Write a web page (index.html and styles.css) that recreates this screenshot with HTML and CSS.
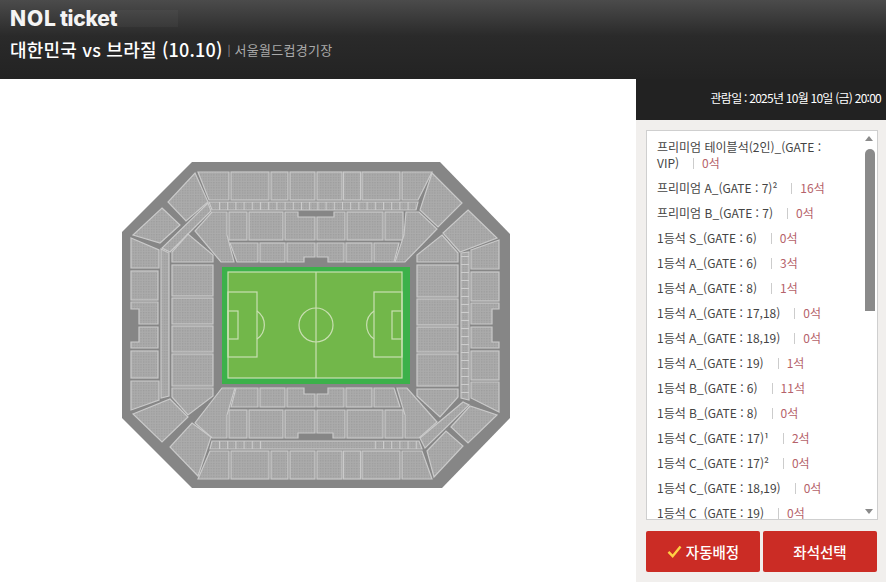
FILE: index.html
```html
<!DOCTYPE html>
<html lang="ko">
<head>
<meta charset="utf-8">
<title>NOL ticket</title>
<link rel="stylesheet" href="styles.css">
</head>
<body>
<header class="top">
  <div class="brand"><span class="nol">NOL</span><span class="ticket">ticket</span><span class="brand-blur"></span></div>
  <div class="event"><h1>대한민국 vs 브라질 (10.10)</h1><span class="bar">|</span><span class="venue">서울월드컵경기장</span></div>
</header>
<div class="main">
  <div class="stage">
    <svg class="map" viewBox="0 79 636 503" width="636" height="503" aria-label="좌석 배치도">
      <defs>
        <pattern id="seat" width="2.6" height="2.6" patternUnits="userSpaceOnUse">
          <rect width="2.6" height="2.6" fill="#ababab"/>
          <rect width="1.3" height="1.3" fill="#9c9c9c"/>
        </pattern>
        <pattern id="tickv" x="219" width="8.2" height="10" patternUnits="userSpaceOnUse">
          <rect width="1" height="10" fill="#cdcdcd"/>
        </pattern>
        <pattern id="tickh" y="256" width="10" height="8" patternUnits="userSpaceOnUse">
          <rect width="10" height="1" fill="#cdcdcd"/>
        </pattern>
      </defs>
      <polygon class="hall" points="192,162 440,162 510,234 510,418 442,488 192,488 122,418 122,232"/>
      <g class="sec" fill="url(#seat)">
        <polygon points="198,172 229,172 229,200 209,200"/>
        <rect x="231" y="172" width="38" height="28"/>
        <rect x="271" y="172" width="17" height="28"/>
        <rect x="290" y="172" width="25" height="28"/>
        <rect x="317" y="172" width="25" height="28"/>
        <rect x="343.500" y="172" width="17" height="28"/>
        <rect x="362" y="172" width="38" height="28"/>
        <polygon points="402,172 432,172 418,200 402,200"/>
        <polygon points="209,202 418,202 416,210 212,210"/>
        <polygon points="212,212 227,212 227,235 234,262 221,262 195,231"/>
        <rect x="229" y="212" width="18" height="28"/>
        <rect x="249" y="212" width="34" height="28"/>
        <polygon points="285,212 298,212 298,217 315,217 315,240 285,240"/>
        <polygon points="317,217 334,217 334,212 345,212 345,240 317,240"/>
        <rect x="347" y="212" width="36" height="28"/>
        <rect x="385" y="212" width="18" height="28"/>
        <polygon points="406,212 419,212 437,229 405,262 395,262 404,235"/>
        <polygon points="230,243 258,243 258,262 237,262"/>
        <rect x="260" y="243" width="25" height="19"/>
        <polygon points="287,243 315,243 315,257 304,257 304,262 287,262"/>
        <polygon points="317,243 344,243 344,262 328,262 328,257 317,257"/>
        <rect x="346" y="243" width="26" height="19"/>
        <polygon points="374,243 399,243 394,262 374,262"/>

        <polygon points="236,388 258,388 258,407 231,407"/>
        <rect x="260" y="388" width="25" height="19"/>
        <polygon points="287,388 304,388 304,394 315,394 315,407 287,407"/>
        <polygon points="317,394 328,394 328,388 344,388 344,407 317,407"/>
        <rect x="346" y="388" width="26" height="19"/>
        <polygon points="374,388 394,388 400,407 374,407"/>
        <polygon points="222,388 235,388 227,415 227,438 212,438 195,423"/>
        <rect x="229" y="410" width="18" height="28"/>
        <rect x="249" y="410" width="34" height="28"/>
        <polygon points="285,410 315,410 315,433 298,433 298,438 285,438"/>
        <polygon points="317,410 345,410 345,438 333,438 333,433 317,433"/>
        <rect x="347" y="410" width="36" height="28"/>
        <rect x="385" y="410" width="18" height="28"/>
        <polygon points="397,388 407,388 437,422 419,438 405,438 405,415"/>
        <polygon points="212,441 419,441 422,449 210,449"/>
        <polygon points="210,451 229,451 229,479 198,479"/>
        <rect x="231" y="451" width="38" height="28"/>
        <rect x="271" y="451" width="17" height="28"/>
        <rect x="290" y="451" width="25" height="28"/>
        <rect x="317" y="451" width="25" height="28"/>
        <rect x="343.500" y="451" width="17" height="28"/>
        <rect x="362" y="451" width="38" height="28"/>
        <polygon points="402,451 422,451 432,479 402,479"/>

        <polygon points="195,173 208,202 186,221 168,202"/>
        <polygon points="162,208 180,225 160,243 133,235"/>
        <polygon points="208,203 211,211 170,252 162,248"/>
        <polygon points="188,234 172,252 172,262 213,262 213,255"/>
        <rect x="172" y="265" width="41" height="31"/>
        <rect x="172" y="298" width="41" height="26"/>
        <rect x="172" y="326" width="41" height="26"/>
        <rect x="172" y="354" width="41" height="32"/>
        <polygon points="172,388 213,388 213,396 188,415 172,397"/>
        <polygon points="161,249 169,253 169,396 161,398"/>
        <polygon points="131,238 159,250 159,268 131,268"/>
        <rect x="131" y="271" width="27" height="29"/>
        <polygon points="131,302 158,302 158,324 139,324 139,309 131,309"/>
        <polygon points="139,327 158,327 158,348 131,348 131,342 139,342"/>
        <rect x="131" y="351" width="27" height="27"/>
        <polygon points="131,381 159,381 159,400 131,410"/>
        <polygon points="133,414 170,399 188,417 162,442"/>
        <polygon points="192,423 211,437 198,476 170,447"/>

        <polygon points="432,173 462,203 438,227 420,210"/>
        <polygon points="468,210 497,238 460,252 443,233"/>
        <polygon points="442,235 458,253 458,262 417,262 417,255"/>
        <rect x="417" y="265" width="41" height="32"/>
        <rect x="417" y="299" width="41" height="26"/>
        <rect x="417" y="327" width="41" height="25"/>
        <rect x="417" y="354" width="41" height="32"/>
        <polygon points="417,389 458,389 458,397 440,417 417,396"/>
        <polygon points="461,253 469,252 469,400 461,398"/>
        <polygon points="471,250 499,240 499,269 471,269"/>
        <rect x="471" y="272" width="28" height="29"/>
        <polygon points="471,303 499,303 499,309 492,309 492,324 471,324"/>
        <polygon points="471,327 492,327 492,342 499,342 499,348 471,348"/>
        <rect x="471" y="351" width="28" height="29"/>
        <polygon points="471,382 499,382 499,412 471,398"/>
        <polygon points="420,438 463,402 469,405 425,448"/>
        <polygon points="427,451 446,431 463,446 434,477"/>
        <polygon points="451,427 470,406 497,415 468,443"/>
      </g>
      <g>
        <rect x="219" y="202" width="197" height="8" fill="url(#tickv)"/>
        <rect x="219" y="441" width="45" height="8" fill="url(#tickv)"/>
        <rect x="372" y="441" width="46" height="8" fill="url(#tickv)"/>
        <rect x="461" y="256" width="8" height="140" fill="url(#tickh)"/>
      </g>
      <rect class="turf" x="222" y="267" width="188" height="117"/>
      <rect class="grass" x="228" y="272" width="174" height="106"/>
      <g class="lines">
        <rect x="228" y="272" width="174" height="106"/>
        <line x1="316" y1="272" x2="316" y2="378"/>
        <circle cx="316" cy="325" r="17"/>
        <rect x="228" y="292" width="29" height="65"/>
        <rect x="228" y="311" width="10" height="28"/>
        <path d="M257 311 A17 17 0 0 1 257 339"/>
        <rect x="374" y="292" width="28" height="65"/>
        <rect x="392" y="311" width="10" height="28"/>
        <path d="M374 311 A17 17 0 0 0 374 339"/>
      </g>
    </svg>
  </div>
  <aside class="side">
    <p class="date">관람일 : 2025년 10월 10일 (금) 20:00</p>
    <div class="panel">
      <div class="listbox">
        <ul class="list">
          <li>프리미엄 테이블석(2인)_(GATE : VIP)<i class="sep"></i><b>0석</b></li>
          <li>프리미엄 A_(GATE : 7)²<i class="sep"></i><b>16석</b></li>
          <li>프리미엄 B_(GATE : 7)<i class="sep"></i><b>0석</b></li>
          <li>1등석 S_(GATE : 6)<i class="sep"></i><b>0석</b></li>
          <li>1등석 A_(GATE : 6)<i class="sep"></i><b>3석</b></li>
          <li>1등석 A_(GATE : 8)<i class="sep"></i><b>1석</b></li>
          <li>1등석 A_(GATE : 17,18)<i class="sep"></i><b>0석</b></li>
          <li>1등석 A_(GATE : 18,19)<i class="sep"></i><b>0석</b></li>
          <li>1등석 A_(GATE : 19)<i class="sep"></i><b>1석</b></li>
          <li>1등석 B_(GATE : 6)<i class="sep"></i><b>11석</b></li>
          <li>1등석 B_(GATE : 8)<i class="sep"></i><b>0석</b></li>
          <li>1등석 C_(GATE : 17)¹<i class="sep"></i><b>2석</b></li>
          <li>1등석 C_(GATE : 17)²<i class="sep"></i><b>0석</b></li>
          <li>1등석 C_(GATE : 18,19)<i class="sep"></i><b>0석</b></li>
          <li>1등석 C_(GATE : 19)<i class="sep"></i><b>0석</b></li>
        </ul>
        <div class="scroll"><span class="up"></span><span class="thumb"></span><span class="down"></span></div>
      </div>
      <div class="actions">
        <button class="btn" type="button"><svg class="check" viewBox="0 0 16 14" width="15" height="13"><path d="M1.500 7.500 L6 12 L14.500 1.500" /></svg>자동배정</button>
        <button class="btn" type="button">좌석선택</button>
      </div>
    </div>
  </aside>
</div>
</body>
</html>
```
FILE: styles.css
```css
* { box-sizing: border-box; }
html, body { margin: 0; height: 582px; overflow: hidden; background: #fff; }
body { font-family: "Noto Sans CJK KR", "Noto Sans", sans-serif; color: #444; }

.top {
  height: 79px;
  padding: 7px 0 0 10px;
  background: linear-gradient(#4b4b4b 0, #2a2a2a 36px, #232323 100%);
  color: #fff;
}
.brand { display: flex; align-items: center; height: 23px; font-family: Inter, sans-serif; font-size: 21px; line-height: 23px; color: #f4f4f4; }
.nol { font-weight: 800; letter-spacing: 0.9px; }
.ticket { font-weight: 800; margin-left: 3px; letter-spacing: -0.3px; }
.brand-blur { width: 61px; height: 17px; margin-left: 0; background: rgba(255,255,255,0.035); }

.event { display: flex; align-items: center; margin-top: 5px; height: 28px; }
.event h1 { margin: 0; font-size: 18px; font-weight: 500; line-height: 28px; letter-spacing: 0.2px; color: #fff; }
.bar { margin: 0 4px 0 5px; font-size: 11px; color: #999; }
.venue { font-size: 13px; letter-spacing: 0.3px; color: #aaa; }

.main { display: flex; height: 503px; }
.stage { width: 636px; flex: none; }
.map { display: block; }
.hall { fill: #868686; }
.sec { stroke: #cacaca; stroke-width: 1.2; }
.turf { fill: #3cb14a; }
.grass { fill: #72b74a; }
.lines { fill: none; stroke: #c9dfb2; stroke-width: 1.2; }

.side { width: 250px; flex: none; background: #f1efed; }
.date {
  margin: 0;
  height: 41px;
  padding: 11px 5px 0 0;
  background: #222;
  color: #fff;
  font-size: 12px;
  line-height: 16px;
  letter-spacing: -0.75px;
  text-align: right;
}
.panel { padding: 10px 8px 0 10px; }
.listbox { position: relative; height: 390px; width: 232px; overflow: hidden; background: #fff; border: 1px solid #cfcfcf; }
.list { list-style: none; margin: 0; padding: 8px 0 0 10px; width: 186px; font-size: 12px; line-height: 16px; color: #444; }
.list li { margin-bottom: 9px; }
.sep { display: inline-block; width: 1px; height: 11px; margin: 0 8px 0 14px; background: #ccc; vertical-align: -1px; }
.list b { font-weight: 400; color: #b5626a; }

.scroll { position: absolute; top: 0; right: 0; bottom: 0; width: 17px; background: #fff; }
.up, .down { position: absolute; left: 5px; width: 0; height: 0; border-left: 4.500px solid transparent; border-right: 4.500px solid transparent; }
.up { top: 5px; border-bottom: 5px solid #8a8a8a; }
.down { bottom: 5px; border-top: 5px solid #8a8a8a; }
.thumb { position: absolute; left: 5px; top: 18px; width: 10px; height: 162px; border-radius: 5px 5px 0 0; background: #8a8a8a; }

.actions { display: flex; gap: 3px; margin-top: 11px; }
.btn {
  display: flex;
  align-items: center;
  justify-content: center;
  gap: 4px;
  width: 114px;
  height: 41px;
  padding: 0;
  border: 0;
  border-radius: 2px;
  background: #cb2c25;
  color: #fff;
  font-family: inherit;
  font-size: 14.500px;
  font-weight: 500;
}
.check { fill: none; stroke: #ffd044; stroke-width: 2.6; }
```
